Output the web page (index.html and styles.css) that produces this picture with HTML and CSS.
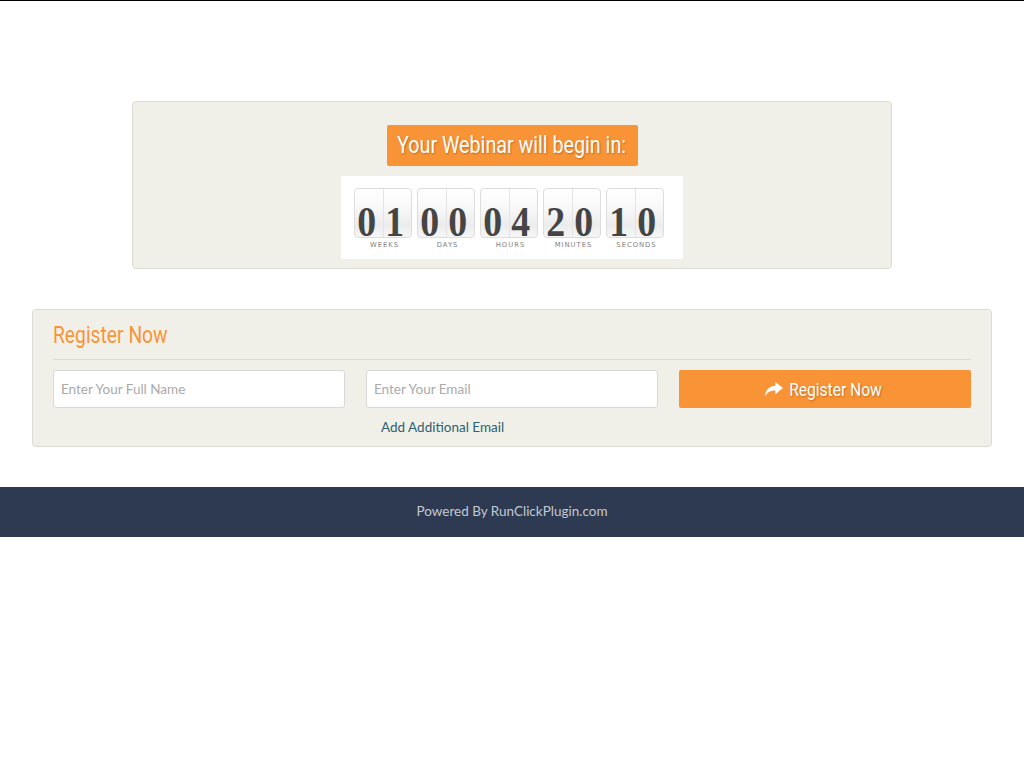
FILE: index.html
```html
<!DOCTYPE html>
<html>
<head>
<meta charset="utf-8">
<title>Webinar</title>
<link rel="stylesheet" href="styles.css">
</head>
<body>
<div class="topline"></div>
<main class="page">
  <section class="countdown-panel">
    <div class="title-box"><span class="cond">Your Webinar will begin in:</span></div>
    <div class="clock">
      <div class="unit">
        <div class="card"><span class="d"><b>0</b></span><span class="d"><b>1</b></span></div>
        <div class="label">WEEKS</div>
      </div>
      <div class="unit">
        <div class="card"><span class="d"><b>0</b></span><span class="d"><b>0</b></span></div>
        <div class="label">DAYS</div>
      </div>
      <div class="unit">
        <div class="card"><span class="d"><b>0</b></span><span class="d"><b>4</b></span></div>
        <div class="label">HOURS</div>
      </div>
      <div class="unit">
        <div class="card"><span class="d"><b>2</b></span><span class="d"><b>0</b></span></div>
        <div class="label">MINUTES</div>
      </div>
      <div class="unit">
        <div class="card"><span class="d"><b>1</b></span><span class="d"><b>0</b></span></div>
        <div class="label">SECONDS</div>
      </div>
    </div>
  </section>

  <section class="register-panel">
    <h2 class="reg-title"><span class="cond">Register Now</span></h2>
    <div class="form-grid">
      <div class="field"><input type="text" placeholder="Enter Your Full Name"></div>
      <div class="field">
        <input type="text" placeholder="Enter Your Email">
        <a class="add-email" href="#">Add Additional Email</a>
      </div>
      <div class="field">
        <button class="btn" type="button">
          <svg class="share" viewBox="0 0 20 16" width="19" height="15"><path d="M12 0 L20 6.5 L12 13 L12 9 C7 9 3.5 10.5 1 15.5 C1.2 9 5 4.3 12 4 Z" fill="#fff"/></svg>
          <span class="cond">Register Now</span>
        </button>
      </div>
    </div>
  </section>
</main>
<footer class="footer">Powered By RunClickPlugin.com</footer>
</body>
</html>
```

FILE: styles.css
```css
* { box-sizing: border-box; }
html, body { margin: 0; padding: 0; background: #fff; }
body { font-family: "Lato", "Open Sans", sans-serif; }

.topline { height: 1px; background: #000; }

.page { padding-top: 100px; padding-bottom: 40px; }

.cond {
  display: inline-block;
  font-family: "Roboto", sans-serif;
  transform: scaleX(0.82);
  white-space: nowrap;
}

.countdown-panel {
  width: 760px;
  height: 168px;
  margin: 0 auto;
  background: #f1f0e8;
  border: 1px solid #dcdcd6;
  border-radius: 4px;
  padding-top: 23px;
  display: flex;
  flex-direction: column;
  align-items: center;
}

.title-box {
  width: 251px;
  height: 41px;
  background: #f99436;
  border-radius: 2px;
  color: #fff;
  font-size: 24px;
  line-height: 41px;
  display: flex;
  justify-content: center;
  text-shadow: 1px 1px 2px rgba(120, 60, 0, 0.45);
}

.clock {
  margin-top: 10px;
  width: 342px;
  height: 83px;
  background: #fff;
  display: flex;
  justify-content: flex-start;
  gap: 5px;
  padding: 12px 0 0 13px;
}

.unit { width: 58px; display: flex; flex-direction: column; align-items: center; }

.card {
  width: 58px;
  height: 50px;
  border: 1px solid #dddddd;
  border-radius: 4px;
  background: linear-gradient(#ffffff 0%, #f8f8f8 40%, #ececec 75%, #f6f6f6 100%);
  display: flex;
  position: relative;
}
.card::after {
  content: "";
  position: absolute;
  left: 28px;
  top: 0;
  bottom: 0;
  width: 1px;
  background: #e4e4e4;
}
.card .d {
  width: 28px;
  height: 48px;
  padding: 18px 4px 0 0;
  text-align: center;
  font-family: "Liberation Serif", serif;
  font-size: 43px;
  line-height: 30px;
  color: #454545;
  position: relative;
  z-index: 1;
}
.card .d b {
  display: inline-block;
  font-weight: bold;
  transform: scaleX(0.88);
}

.label {
  margin-top: 3px;
  padding-left: 3px;
  font-family: "DejaVu Sans", sans-serif;
  font-size: 6.8px;
  line-height: 8px;
  letter-spacing: 1px;
  color: #808080;
}

.register-panel {
  width: 960px;
  margin: 40px auto 0;
  background: #f1f0e8;
  border: 1px solid #dcdcd6;
  border-radius: 4px;
  padding: 10px 20px 10px;
  height: 138px;
}

.reg-title {
  margin: 0;
  font-weight: normal;
  font-size: 23.5px;
  color: #f99436;
  line-height: 28px;
  padding-bottom: 10px;
  border-bottom: 1px solid #dcdcd6;
}
.reg-title .cond { transform-origin: left center; }

.form-grid {
  display: grid;
  grid-template-columns: 1fr 1fr 1fr;
  gap: 21px;
  margin-top: 10px;
}

.field { display: flex; flex-direction: column; }

input {
  height: 38px;
  border: 1px solid #d8d8d8;
  border-radius: 3px;
  background: #fff;
  padding: 0 7px;
  font-family: "Lato", sans-serif;
  font-size: 13.5px;
  color: #555;
  outline: none;
}
input::placeholder { color: #aaa; }

.add-email {
  margin-top: 11px;
  padding-left: 15px;
  font-size: 13.5px;
  color: #2d6173;
  text-decoration: none;
}

.btn {
  height: 38px;
  border: 0;
  border-radius: 2px;
  background: #f99436;
  color: #fff;
  font-size: 19px;
  display: flex;
  align-items: center;
  justify-content: center;
  text-shadow: 1px 1px 2px rgba(120, 60, 0, 0.45);
  cursor: pointer;
  padding: 0 0 0 6px;
}
.btn .share { margin-right: -4px; }

.footer {
  height: 50px;
  background: #2d3a52;
  color: #c3c8d1;
  font-size: 13.5px;
  text-align: center;
  line-height: 48px;
}
```
